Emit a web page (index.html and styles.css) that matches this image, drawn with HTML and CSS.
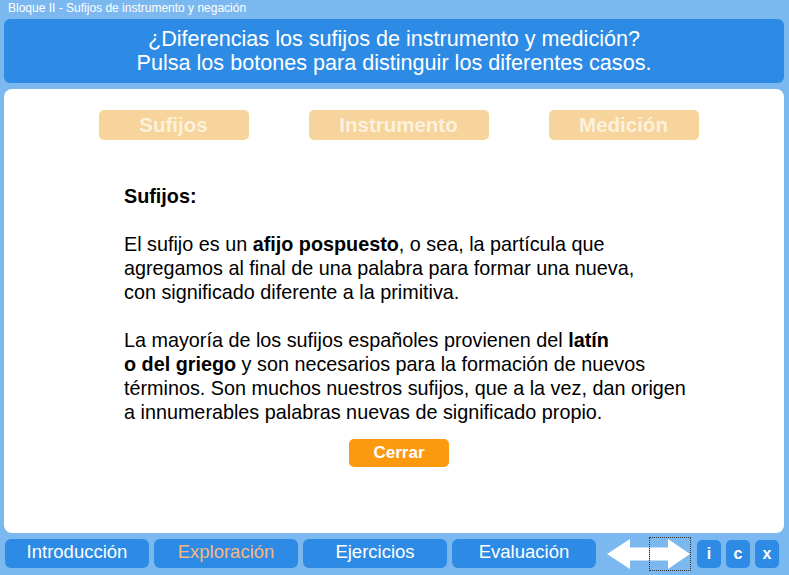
FILE: index.html
```html
<!DOCTYPE html>
<html lang="es">
<head>
<meta charset="utf-8">
<title>Bloque II - Sufijos de instrumento y negación</title>
<link rel="stylesheet" href="styles.css">
</head>
<body>
<div class="app">
  <div class="topbar">Bloque II - Sufijos de instrumento y negación</div>
  <header class="header">
    <p>¿Diferencias los sufijos de instrumento y medición?</p>
    <p>Pulsa los botones para distinguir los diferentes casos.</p>
  </header>
  <main class="panel">
    <div class="tabs">
      <div class="tab tab-sm">Sufijos</div>
      <div class="tab tab-lg">Instrumento</div>
      <div class="tab tab-sm">Medición</div>
    </div>
    <div class="content">
      <p class="title">Sufijos:</p>
      <p>El sufijo es un <b>afijo pospuesto</b>, o sea, la partícula que<br>agregamos al final de una palabra para formar una nueva,<br>con significado diferente a la primitiva.</p>
      <p>La mayoría de los sufijos españoles provienen del <b>latín</b><br><b>o del griego</b> y son necesarios para la formación de nuevos<br>términos. Son muchos nuestros sufijos, que a la vez, dan origen<br>a innumerables palabras nuevas de significado propio.</p>
    </div>
    <div class="close-row"><div class="close-btn">Cerrar</div></div>
  </main>
  <nav class="nav">
    <div class="nav-btn">Introducción</div>
    <div class="nav-btn active">Exploración</div>
    <div class="nav-btn">Ejercicios</div>
    <div class="nav-btn">Evaluación</div>
    <div class="arrows">
      <svg class="arrow" width="42" height="32" viewBox="0 0 42 32"><path d="M0 16 L23 1 L23 9.5 L42 9.5 L42 22.5 L23 22.5 L23 31 Z" fill="#fff"/></svg>
      <div class="arrow-focus">
        <svg class="arrow" width="40" height="32" viewBox="0 0 40 32"><path d="M40 16 L18 1 L18 9.5 L0 9.5 L0 22.5 L18 22.5 L18 31 Z" fill="#fff"/></svg>
      </div>
    </div>
    <div class="sq-btn">i</div>
    <div class="sq-btn">c</div>
    <div class="sq-btn">x</div>
  </nav>
</div>
</body>
</html>
```

FILE: styles.css
```css
* { box-sizing: border-box; }
html, body { margin: 0; padding: 0; }
body {
  background: #7cb8f0;
  font-family: "Liberation Sans", Arial, sans-serif;
}
.app {
  width: 789px;
  height: 575px;
  background: #7cb8f0;
  display: flex;
  flex-direction: column;
}
.topbar {
  height: 19px;
  padding-left: 8px;
  color: #fff;
  font-size: 12px;
  line-height: 17px;
}
.header {
  margin: 0 5px 0 4px;
  height: 64px;
  background: #2d8be6;
  border-radius: 6px;
  color: #fff;
  text-align: center;
  font-size: 21.6px;
  line-height: 24px;
  padding-top: 8px;
}
.header p { margin: 0; }
.panel {
  margin: 6px 5px 0 4px;
  height: 444px;
  background: #fff;
  border-radius: 8px;
  display: flex;
  flex-direction: column;
}
.tabs {
  display: flex;
  justify-content: center;
  gap: 60px;
  padding-top: 21px;
  padding-left: 9px;
}
.tab {
  height: 30px;
  background: #f6d49b;
  border-radius: 5px;
  color: #fdf1de;
  font-weight: bold;
  font-size: 20.5px;
  line-height: 29px;
  text-align: center;
}
.tab-sm { width: 150px; }
.tab-lg { width: 180px; }
.content {
  padding: 44px 0 0 120px;
  font-size: 19.8px;
  line-height: 24px;
  color: #000;
}
.content p { margin: 0 0 24px 0; }
.content p:last-child { margin-bottom: 0; }
.content .title { font-weight: bold; }
.close-row {
  padding: 15px 0 0 345px;
}
.close-btn {
  width: 100px;
  height: 28px;
  background: #fb9a0e;
  border-radius: 5px;
  color: #fff;
  font-weight: bold;
  font-size: 17px;
  line-height: 28px;
  text-align: center;
}
.nav {
  display: flex;
  align-items: center;
  margin-top: 6px;
  padding-left: 5px;
  height: 29px;
}
.nav-btn {
  width: 144px;
  height: 29px;
  margin-right: 5px;
  background: #2d8be6;
  border-radius: 6px;
  color: #fff;
  font-size: 18.5px;
  line-height: 26px;
  text-align: center;
}
.nav-btn.active { color: #f8b87c; }
.arrows {
  display: flex;
  align-items: center;
  margin-left: 6px;
  margin-right: 7px;
  gap: 1px;
}
.arrow { display: block; }
.arrow-focus {
  outline: 1px dotted #333;
  outline-offset: 0;
}
.sq-btn {
  width: 24px;
  height: 28px;
  margin-right: 5px;
  background: #2d8be6;
  border-radius: 5px;
  color: #fff;
  font-weight: bold;
  font-size: 16px;
  line-height: 27px;
  text-align: center;
}
```
